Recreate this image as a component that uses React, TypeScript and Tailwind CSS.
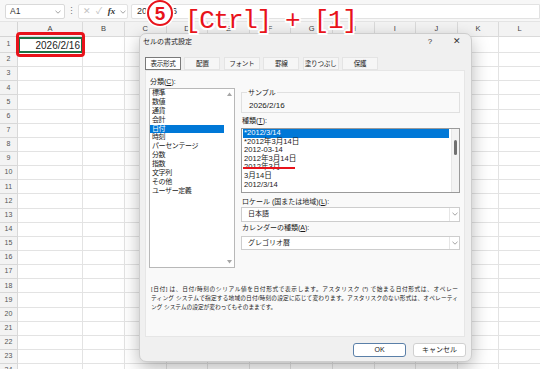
import React from "react";

const COLS = [
  { l: "A", w: "w-[65px]" },
  { l: "B", w: "w-[42px]" },
  { l: "C", w: "w-[41.6px]" },
  { l: "D", w: "w-[41.6px]" },
  { l: "E", w: "w-[41.6px]" },
  { l: "F", w: "w-[41.6px]" },
  { l: "G", w: "w-[41.6px]" },
  { l: "H", w: "w-[41.6px]" },
  { l: "I", w: "w-[41.6px]" },
  { l: "J", w: "w-[41.6px]" },
  { l: "K", w: "w-[41.6px]" },
  { l: "L", w: "w-[41.6px]" },
];

const ROWS = Array.from({ length: 24 }, (_, i) => i + 1);

const CATEGORIES = [
  "標準",
  "数値",
  "通貨",
  "会計",
  "日付",
  "時刻",
  "パーセンテージ",
  "分数",
  "指数",
  "文字列",
  "その他",
  "ユーザー定義",
];

const TYPES = [
  "*2012/3/14",
  "*2012年3月14日",
  "2012-03-14",
  "2012年3月14日",
  "2012年3月",
  "3月14日",
  "2012/3/14",
];

const TABS = ["表示形式", "配置", "フォント", "罫線", "塗りつぶし", "保護"];

function Chevron({ className = "" }: { className?: string }) {
  return (
    <svg width="6" height="4" viewBox="0 0 6 4" className={className}>
      <polyline points="0.5,0.8 3,3.2 5.5,0.8" fill="none" stroke="#8a8a8a" strokeWidth="0.8" />
    </svg>
  );
}

function Tri({ up }: { up?: boolean }) {
  return (
    <svg width="5" height="4" viewBox="0 0 5 4">
      <polygon points={up ? "0,4 2.5,0.5 5,4" : "0,0 2.5,3.5 5,0"} fill="#a6a6a6" />
    </svg>
  );
}

export default function App() {
  return (
    <div className="relative w-[540px] h-[369px] overflow-hidden bg-white font-['Liberation_Sans','Noto_Sans_CJK_JP',sans-serif] text-[#222]">
      {/* Formula bar */}
      <div className="flex items-start h-[22px] pt-[4px] bg-[#f7f7f7] border-b border-[#e4e4e4]">
        <div className="ml-[5px] w-[60px] h-[15px] bg-white border border-[#d9d9d9] rounded-[2px] flex items-center justify-between pl-[4px] pr-[3px] text-[8.5px] text-[#333]">
          <span>A1</span>
          <Chevron />
        </div>
        <div className="w-[13px] h-[15px] flex items-center justify-center text-[9px] text-[#777]">⋮</div>
        <div className="w-[50px] h-[15px] bg-white border border-[#e2e2e2] rounded-[2px] flex items-center pl-[2px]">
          <span className="w-[12px] text-center text-[9px] text-[#c2c2c2] leading-none">✕</span>
          <span className="w-[12px] text-center text-[9px] text-[#c2c2c2] leading-none">✓</span>
          <span className="w-[13px] text-center text-[9px] italic font-['Liberation_Serif',serif] text-[#333] leading-none font-bold">fx</span>
          <span className="w-[9px] flex justify-center">
            <Chevron />
          </span>
        </div>
        <div className="ml-[3px] flex-1 h-[15px] bg-white border border-[#e2e2e2] rounded-l-[2px] flex items-center pl-[5px] text-[9px] text-[#333]">
          2026/2/16
        </div>
      </div>

      {/* Grid */}
      <div className="flex flex-col">
        <div className="flex h-[15px]">
          <div className="w-[18px] shrink-0 bg-[#f3f3f3] border-r border-b border-[#d4d4d4]" />
          {COLS.map((c) => (
            <div
              key={c.l}
              className={`${c.w} shrink-0 bg-[#f3f3f3] border-r border-b border-[#dadada] flex items-center justify-center text-[7.5px] text-[#444]`}
            >
              {c.l}
            </div>
          ))}
        </div>
        {ROWS.map((r) => (
          <div key={r} className={`flex shrink-0 ${r === 1 ? "h-[16px]" : "h-[14.15px]"}`}>
            <div className="w-[18px] shrink-0 bg-[#f3f3f3] border-r border-b border-[#d8d8d8] flex items-center justify-center text-[7px] text-[#555]">
              {r}
            </div>
            {COLS.map((c, i) =>
              r === 1 && i === 0 ? (
                <div
                  key={c.l}
                  className={`${c.w} shrink-0 border-2 border-[#1e7145] flex items-center justify-end pr-[1px] text-[10px] text-[#222]`}
                >
                  2026/2/16
                </div>
              ) : (
                <div key={c.l} className={`${c.w} shrink-0 border-r border-b border-[#e3e3e3]`} />
              )
            )}
          </div>
        ))}
      </div>

      {/* Red highlight around A1 */}
      <div className="absolute left-[16px] top-[31.5px] w-[69px] h-[25px] border-[3px] border-[#e8131b] rounded-[4px]" />

      {/* Dialog */}
      <div className="absolute left-[139px] top-[33px] w-[333px] h-[329px] rounded-[7px] bg-[#f0f0f0] border border-[#cdcdcd] shadow-[0_6px_18px_rgba(0,0,0,0.28)] flex flex-col text-[7px] text-[#1a1a1a]">
        <div className="h-[16px] flex items-center justify-between pl-[3px] pr-[9px]">
          <span className="text-[7px]">セルの書式設定</span>
          <div className="flex items-center gap-[17px]">
            <span className="w-[10px] text-center text-[8px] text-[#333]">?</span>
            <span className="w-[10px] text-center text-[9px] text-[#333]">✕</span>
          </div>
        </div>
        <div className="mt-[7px] h-[13px] flex gap-[3.4px] pl-[5px]">
          {TABS.map((t, i) => (
            <div
              key={t}
              className={`w-[36px] h-[13px] flex items-center justify-center whitespace-nowrap text-[6.6px] tracking-[-0.3px] ${
                i === 0
                  ? "bg-white border border-[#7a7a7a]"
                  : "bg-[#f6f6f6] border border-[#e4e4e4]"
              }`}
            >
              {t}
            </div>
          ))}
        </div>
        <div className="ml-[5px] w-[320px] h-[267px] bg-[#f9f9f9] border border-[#e6e6e6] flex flex-col">
          <div className="flex pl-[3px] pt-[6px]">
            {/* Category */}
            <div className="w-[86px] flex flex-col">
              <div className="h-[10px] flex items-center pl-[1px]">分類(<span className="underline">C</span>):</div>
              <div className="mt-[1px] h-[180px] bg-white border border-[#b8b8b8] flex">
                <div className="w-[74px] flex flex-col">
                  {CATEGORIES.map((c, i) => (
                    <div
                      key={c}
                      className={`h-[8.9px] leading-[8.9px] pl-[2px] text-[7px] tracking-[-0.4px] ${
                        i === 4 ? "bg-[#0078d7] text-white" : ""
                      }`}
                    >
                      {c}
                    </div>
                  ))}
                </div>
                <div className="w-[10px] flex flex-col items-center justify-between py-[3px]">
                  <Tri up />
                  <Tri />
                </div>
              </div>
            </div>
            {/* Right column */}
            <div className="ml-[6px] w-[219px] flex flex-col">
              <div className="relative mt-[14.7px] h-[21.6px] border border-[#e0e0e0] pl-[7px] pt-[8px]">
                <span className="absolute top-[-3.5px] left-[5px] px-[1px] bg-[#f9f9f9] leading-[8px] text-[7px]">
                  サンプル
                </span>
                <div className="leading-[9px] text-[8px]">2026/2/16</div>
              </div>
              <div className="mt-[3.4px] h-[10px] flex items-center pl-[1px]">
                種類(<span className="underline">T</span>):
              </div>
              <div className="relative mt-[1.3px] h-[65px] bg-white border border-[#9a9a9a] flex">
                <div className="flex-1 flex flex-col pl-[1px] pr-[2px]">
                  {TYPES.map((t, i) => (
                    <div
                      key={t}
                      className={`h-[8.6px] leading-[8.6px] pl-[1px] text-[7.6px] ${
                        i === 0 ? "bg-[#0078d7] text-white" : ""
                      }`}
                    >
                      {t}
                    </div>
                  ))}
                </div>
                <div className="w-[8px] bg-[#f3f3f3] border-l border-[#e6e6e6] flex justify-center pt-[11px]">
                  <div className="w-[2.5px] h-[15px] rounded-full bg-[#707070]" />
                </div>
                <div className="absolute top-[38.5px] left-[1px] w-[52px] h-[2px] bg-[#e8131b]" />
              </div>
              <div className="mt-[4.3px] h-[10px] flex items-center pl-[1px]">
                ロケール (国または地域)(<span className="underline">L</span>):
              </div>
              <div className="h-[14.4px] bg-white border border-[#cdcdcd] flex">
                <div className="flex-1 flex items-center pl-[6px]">日本語</div>
                <div className="w-[10px] border-l border-[#e6e6e6] flex items-center justify-center">
                  <Chevron />
                </div>
              </div>
              <div className="mt-[1.6px] h-[10px] flex items-center pl-[1px]">
                カレンダーの種類(<span className="underline">A</span>):
              </div>
              <div className="mt-[2.4px] h-[14.3px] bg-white border border-[#cdcdcd] flex">
                <div className="flex-1 flex items-center pl-[6px]">グレゴリオ暦</div>
                <div className="w-[10px] border-l border-[#e6e6e6] flex items-center justify-center">
                  <Chevron />
                </div>
              </div>
            </div>
          </div>
          {/* Description */}
          <div className="mt-[16.8px] pl-[5px] flex flex-col text-[5.7px] leading-[9px] text-[#222]">
            <div className="w-[307px] whitespace-nowrap text-justify [text-align-last:justify]">
              [日付] は、日付/時刻のシリアル値を日付形式で表示します。アスタリスク (*) で始まる日付形式は、オペレー
            </div>
            <div className="w-[307px] whitespace-nowrap text-justify [text-align-last:justify]">
              ティング システムで指定する地域の日付/時刻の設定に応じて変わります。アスタリスクのない形式は、オペレーティ
            </div>
            <div className="whitespace-nowrap">ング システムの設定が変わってもそのままです。</div>
          </div>
        </div>
        <div className="flex justify-end gap-[7px] pt-[6px] pr-[5px]">
          <div className="w-[53px] h-[14px] bg-white border border-[#5a7fa8] rounded-[3px] flex items-center justify-center text-[7px]">
            OK
          </div>
          <div className="w-[53px] h-[14px] bg-white border border-[#d0d0d0] rounded-[3px] flex items-center justify-center text-[7px]">
            キャンセル
          </div>
        </div>
      </div>

      {/* Annotation: circled 5 */}
      <div className="absolute left-[147px] top-[0px] w-[26px] h-[26px] rounded-full border-[2.5px] border-[#e8131b] bg-white shadow-[0_0_0_1.5px_#fff] flex items-center justify-center">
        <span className="text-[19px] leading-none font-bold font-['Liberation_Sans',sans-serif] text-[#e8131b] mt-[1px]">
          5
        </span>
      </div>
      <span className="absolute left-[185px] top-[7.5px] whitespace-pre text-[26px] leading-[26px] tracking-[-1.3px] font-['Liberation_Mono',monospace] text-[#e8131b] [text-shadow:-1.5px_-1.5px_0_#fff,1.5px_-1.5px_0_#fff,-1.5px_1.5px_0_#fff,1.5px_1.5px_0_#fff,0_-2px_0_#fff,0_2px_0_#fff,-2px_0_0_#fff,2px_0_0_#fff]">
        [Ctrl] + [1]
      </span>
    </div>
  );
}
